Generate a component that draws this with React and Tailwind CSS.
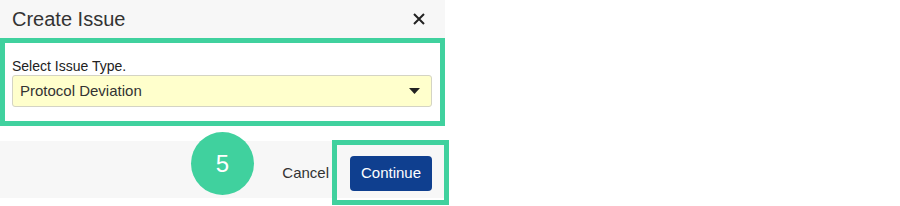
import React from "react";

const CloseIcon = () => (
  <svg width="12" height="12" viewBox="0 0 12 12" className="text-[#222]">
    <path d="M1 1 L11 11 M11 1 L1 11" stroke="currentColor" strokeWidth="2" />
  </svg>
);

const CaretDown = () => (
  <svg width="11" height="6" viewBox="0 0 11 6">
    <path d="M0 0 H11 L5.5 6 Z" fill="#222" />
  </svg>
);

const App = () => {
  return (
    <div
      className="relative w-[900px] h-[206px] bg-white text-[#333]"
      style={{ fontFamily: '"Liberation Sans", Arial, sans-serif' }}
    >
      <div className="w-[445px]">
        {/* header */}
        <div className="h-[38px] bg-[#f7f7f7] flex items-center justify-between pl-[12px] pr-[20px]">
          <h1 className="text-[20px] leading-none text-[#333]">Create Issue</h1>
          <CloseIcon />
        </div>

        {/* highlighted body */}
        <div className="h-[88px] border-[5px] border-[#40d19e] bg-white pl-[7px] pr-[8px] pt-[15px]">
          <label className="block text-[14px] leading-[17px] text-[#222]">
            Select Issue Type.
          </label>
          <div className="h-[32px] bg-[#ffffcc] border border-[#d4d4c4] rounded-[3px] flex items-center justify-between pl-[7px] pr-[11px]">
            <span className="text-[15px] text-[#333]">Protocol Deviation</span>
            <CaretDown />
          </div>
        </div>

        {/* footer */}
        <div className="mt-[15px] h-[57px] bg-[#f7f7f7] flex items-center justify-end pr-[13px] gap-[21px]">
          <span className="text-[15px] text-[#333] mt-[8px]">Cancel</span>
          <button className="w-[82px] h-[35px] rounded-[4px] bg-[#0f3f8f] text-white text-[15px] mt-[8px]">
            Continue
          </button>
        </div>
      </div>

      {/* step annotation */}
      <div className="absolute left-[191px] top-[132px] w-[63px] h-[63px] rounded-full bg-[#40d19e] flex items-center justify-center text-white text-[24px]">
        5
      </div>
      <div className="absolute left-[332px] top-[140px] w-[117px] h-[65px] border-[5px] border-[#40d19e]" />
    </div>
  );
};

export default App;
